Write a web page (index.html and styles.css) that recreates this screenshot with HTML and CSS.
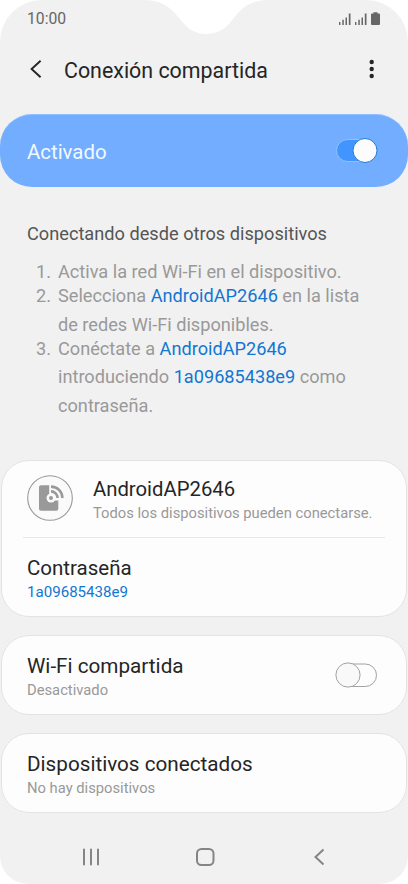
FILE: index.html
```html
<!DOCTYPE html>
<html lang="es">
<head>
<meta charset="utf-8">
<title>Conexión compartida</title>
<link rel="stylesheet" href="styles.css">
</head>
<body>
<div class="screen">
  <svg class="notch" width="124" height="35" viewBox="0 0 124 35"><path d="M0 0C13 0 22 4 30 12L41 25C47 31 54 34 62 34S78 31 84 25L94 13C101 5 111 0 124 0Z" fill="#fff"/></svg>
  <div class="status">
    <span class="clock">10:00</span>
    <svg width="44" height="16" viewBox="0 0 44 16" fill="#666">
      <path d="M1 12h1.400v3H1zM4.300 9.700h1.500V15H4.300zM7.500 7.500h1.500V15H7.500zM10.800 3.500h1.700V15h-1.700z" />
      <path d="M17 12h1.400v3H17zM20.300 9.700h1.500V15h-1.500zM23.500 7.500h1.500V15h-1.500zM26.800 3.500h1.700V15h-1.700z"/>
      <path d="M35.500 2.300h4v1.200h1.500q1 0 1 1V14q0 1-1 1h-7q-1 0-1-1V4.500q0-1 1-1h1.500z"/>
    </svg>
  </div>
  <header class="bar">
    <svg class="back" width="14" height="20" viewBox="0 0 14 20"><path d="M12.600 1.700L3.600 10L12.600 18.300" fill="none" stroke="#252525" stroke-width="1.900"/></svg>
    <h1>Conexión compartida</h1>
    <svg class="more" width="6" height="20" viewBox="0 0 6 20" fill="#252525"><circle cx="2.700" cy="3" r="2.200"/><circle cx="2.700" cy="10" r="2.200"/><circle cx="2.700" cy="17" r="2.200"/></svg>
  </header>
  <div class="banner">
    <span>Activado</span>
    <svg width="44" height="28" viewBox="0 0 44 28"><rect x="2.500" y="3.500" width="39" height="22" rx="11" fill="#4295ff" stroke="#8fc3ff"/><circle cx="31" cy="14.500" r="12" fill="#fcfcfc" stroke="#1d7cd6"/></svg>
  </div>
  <section class="help">
    <h2>Conectando desde otros dispositivos</h2>
    <ol>
      <li><span class="num">1.</span><p>Activa la red Wi-Fi en el dispositivo.</p></li>
      <li><span class="num">2.</span><p>Selecciona <b>AndroidAP2646</b> en la lista<br>de redes Wi-Fi disponibles.</p></li>
      <li><span class="num">3.</span><p>Conéctate a <b>AndroidAP2646</b><br>introduciendo <b>1a09685438e9</b> como<br>contraseña.</p></li>
    </ol>
  </section>
  <section class="card network">
    <div class="row ap">
      <svg width="46" height="46" viewBox="0 0 46 46">
        <circle cx="23" cy="23" r="22.300" fill="#fafafa" stroke="#999" stroke-width="1.100"/>
        <path d="M14 10.300H22.200V25.500H31.300V33.700Q31.300 35.700 29.300 35.700H14Q12 35.700 12 33.700V12.300Q12 10.300 14 10.300Z" fill="#999"/>
        <circle cx="24" cy="23" r="4.500" fill="#fafafa"/>
        <circle cx="24" cy="23" r="2" fill="#999"/>
        <path d="M24 16.400A6.600 6.600 0 0 1 30.600 23M24 11.600A11.400 11.400 0 0 1 35.400 23" fill="none" stroke="#999" stroke-width="2.600"/>
      </svg>
      <div><h3>AndroidAP2646</h3><p class="sub">Todos los dispositivos pueden conectarse.</p></div>
    </div>
    <div class="row pass"><div><h3>Contraseña</h3><p class="sub link">1a09685438e9</p></div></div>
  </section>
  <section class="card single">
    <div><h3>Wi-Fi compartida</h3><p class="sub">Desactivado</p></div>
    <svg width="44" height="28" viewBox="0 0 44 28"><rect x="2.500" y="3" width="39" height="22.500" rx="11.250" fill="#fdfdfd" stroke="#a2a2a2"/><circle cx="13" cy="14" r="12.100" fill="#f9f9f9" stroke="#a2a2a2"/></svg>
  </section>
  <section class="card single">
    <div><h3>Dispositivos conectados</h3><p class="sub">No hay dispositivos</p></div>
  </section>
  <nav>
    <svg width="18" height="18" viewBox="0 0 18 18" stroke="#858585" stroke-width="2" stroke-linecap="round"><path d="M2 1.500v15M9 1.500v15M16 1.500v15"/></svg>
    <svg class="home" width="20" height="20" viewBox="0 0 20 20"><rect x="2" y="2" width="16.500" height="16" rx="4.500" fill="none" stroke="#858585" stroke-width="2"/></svg>
    <svg width="12" height="18" viewBox="0 0 12 18"><path d="M10.500 1.500L2.500 9l8 7.500" fill="none" stroke="#858585" stroke-width="2"/></svg>
  </nav>
</div>
</body>
</html>
```
FILE: styles.css
```css
* { box-sizing: border-box; margin: 0; padding: 0; }
body { background: #fff; font-family: Roboto, "Liberation Sans", sans-serif; color: #252525; }
svg { display: block; flex: none; }
h1, h2, h3, b { font-weight: 400; }
h1, h2, h3, p, span { white-space: nowrap; }
.screen {
  position: relative;
  display: flex;
  flex-direction: column;
  width: 408px;
  height: 884px;
  overflow: hidden;
  background: #f1f1f1;
  border-radius: 42px 42px 28px 28px;
}
.notch { position: absolute; top: 0; left: 144px; }
.status { display: flex; justify-content: space-between; align-items: flex-start; height: 38px; padding: 10px 26px 0 27px; }
.clock { font-size: 15.7px; line-height: 18px; color: #666; }
.bar { display: flex; align-items: center; height: 64px; padding: 0 33px 0 28px; }
.bar h1 { flex: 1; margin: 1px 0 0 22px; font-size: 21.4px; line-height: 28px; }
.bar .more { margin-top: -2px; }
.bar .back { margin-top: -2px; }
.banner {
  display: flex;
  align-items: center;
  justify-content: space-between;
  height: 73px;
  margin-top: 12px;
  padding: 1px 30px 0 27px;
  border-radius: 32px;
  background: #72adff;
  border-top: 1px solid #91beff;
  color: #f1f9ff;
  font-size: 20.4px;
}
.banner svg { margin-top: -3px; }
.help { height: 273px; padding: 33px 27px 0; color: #999; font-size: 18.17px; }
.help h2 { color: #555; font-size: 18.2px; line-height: 28px; }
.help ol { list-style: none; margin-top: 10px; }
.help li { display: flex; line-height: 28.36px; margin-bottom: -4px; }
.num { width: 31px; padding-left: 9px; }
.help b { color: #1276d3; }
.card { margin: 0 1px 18px; border: 1px solid #e3e3e3; border-radius: 28px; background: #fdfdfd; }
h3 { font-size: 20.3px; line-height: 24px; }
.sub { font-size: 14.75px; line-height: 23px; color: #999; }
.link { font-size: 15.1px; color: #1276d3; }
.network { height: 157px; }
.row { display: flex; }
.ap { height: 77px; margin: 0 21px; padding: 14px 0 0 4px; border-bottom: 1px solid #e8e8e8; gap: 20px; }
.ap > div { padding-top: 2px; }
.ap .sub { padding-top: 1px; }
.pass { padding: 18px 25px 0; }
.pass .sub { padding-top: 1px; }
.pass h3 { font-size: 20.5px; }
.single { display: flex; align-items: center; justify-content: space-between; height: 80px; padding: 5px 27px 0 25px; }
.single h3 { font-size: 20.7px; line-height: 25px; }
.single svg { margin-top: -5px; }
nav { display: flex; justify-content: space-between; align-items: center; margin-top: 16px; height: 20px; padding: 0 83px 0 82px; }
.home { margin-right: 3px; }
```
